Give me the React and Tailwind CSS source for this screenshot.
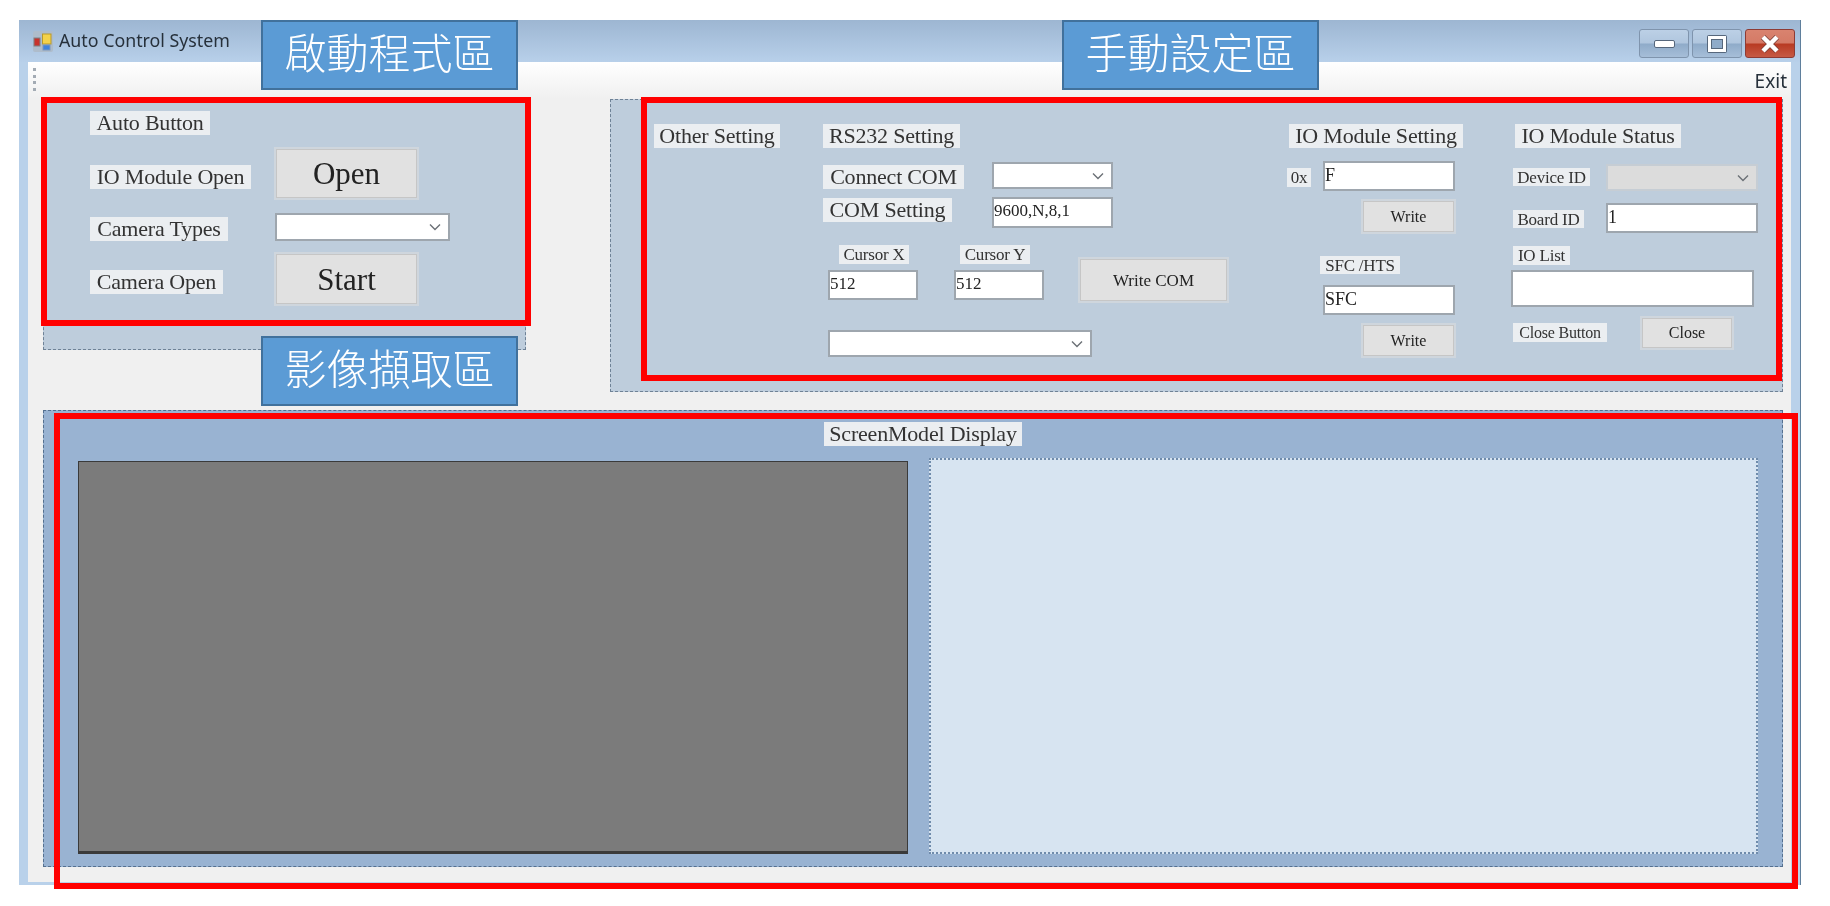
const serif = "font-['Liberation_Serif','Noto_Sans_CJK_TC',serif]";

function Label({ w, h = 24, size = "text-[22px]", className = "", children }) {
  return (
    <div
      style={{ width: w, height: h }}
      className={`flex shrink-0 items-center justify-center whitespace-nowrap bg-[#ebeef1] leading-none tracking-[-0.2px] text-[#333] ${size} ${className}`}
    >
      {children}
    </div>
  );
}

function Btn({ w, h, size = "text-[16px]", className = "", children }) {
  return (
    <div
      style={{ width: w, height: h }}
      className={`flex shrink-0 items-center justify-center border-2 border-[#cfd6dd] bg-[#e1e1e1] leading-none text-[#222] shadow-[inset_0_0_0_1px_#c6c6c6] ${size} ${className}`}
    >
      {children}
    </div>
  );
}

function Input({ w, h = 30, value = "", size = "text-[17px]", className = "" }) {
  return (
    <div
      style={{ width: w, height: h }}
      className={`flex shrink-0 items-start overflow-hidden border-2 border-[#9ea6ae] bg-white pl-0 pt-[2px] leading-[20px] text-[#222] ${size} ${className}`}
    >
      {value}
    </div>
  );
}

function Select({ w, h = 27, disabled = false, className = "" }) {
  return (
    <div
      style={{ width: w, height: h }}
      className={`flex shrink-0 items-center justify-end border-2 pr-[6px] ${disabled ? "border-[#c6cdd4] bg-[#dcdcdc]" : "border-[#9ea6ae] bg-white"} ${className}`}
    >
      <svg width="14" height="8" viewBox="0 0 14 8" fill="none" stroke="#6b7076" strokeWidth="1.4">
        <path d="M2 1.5 7 6.5 12 1.5" />
      </svg>
    </div>
  );
}

function WinButton({ className = "", children }) {
  return (
    <div className={`flex h-[29px] w-[50px] items-center justify-center rounded-[3px] border ${className}`}>
      {children}
    </div>
  );
}

function Callout({ className, children }) {
  return (
    <div
      className={`absolute flex h-[70px] w-[257px] items-center justify-center border-2 border-[#41719c] bg-[#5b9bd5] text-[42px] font-light leading-none text-white ${className}`}
    >
      {children}
    </div>
  );
}

export default function App() {
  return (
    <div className={`relative h-[906px] w-[1830px] overflow-hidden bg-white pl-[19px] pt-[20px] blur-[0.5px] ${serif}`}>
      {/* window */}
      <div className="flex h-[865px] w-[1782px] flex-col border-r border-[#5f7f9c] bg-[#b9d1ea] pr-[9px]">
        {/* title bar */}
        <div className="-mr-[9px] flex h-[42px] shrink-0 items-center bg-gradient-to-b from-[#9db6d2] to-[#b8d0ea] pl-[14px] pr-[5px]">
          <svg width="20" height="21" viewBox="0 0 20 21" className="shrink-0">
            <rect width="20" height="21" rx="2" fill="#aebccb" />
            <rect x="1" y="7" width="6" height="8" fill="#c8322c" stroke="#7d8086" strokeWidth="1" />
            <rect x="9.5" y="3" width="8.5" height="10" fill="#f4d24a" stroke="#b99a2a" strokeWidth="1" />
            <rect x="10" y="14" width="7" height="5" fill="#3f83dc" stroke="#7d98bd" strokeWidth="1" />
          </svg>
          <span className="ml-[6px] font-['Noto_Sans',sans-serif] text-[17.8px] leading-none text-[#26303a]">
            Auto Control System
          </span>
          <div className="ml-auto flex gap-[3px] self-start pt-[9px]">
            <WinButton className="border-[#7f94ad] bg-[linear-gradient(#bcd0e6_0%,#b0c6de_48%,#8fabc9_52%,#a6bed8_100%)]">
              <div className="h-[8px] w-[21px] rounded-[2px] border border-[#56677c] bg-white" />
            </WinButton>
            <WinButton className="border-[#7f94ad] bg-[linear-gradient(#bcd0e6_0%,#b0c6de_48%,#8fabc9_52%,#a6bed8_100%)]">
              <div className="flex h-[18px] w-[20px] items-center justify-center rounded-[2px] bg-[#56677c] p-[1px]">
                <div className="flex h-full w-full items-center justify-center bg-white p-[3px]">
                  <div className="h-full w-full border border-[#56677c] bg-[#8fabc9]" />
                </div>
              </div>
            </WinButton>
            <WinButton className="border-[#8e3b34] bg-[linear-gradient(#d9836f_0%,#d47a66_48%,#b83a22_52%,#c65a45_100%)]">
              <svg width="24" height="20" viewBox="0 0 24 20" fill="none">
                <path d="M5 3 19 17M19 3 5 17" stroke="#7a4038" strokeWidth="6" />
                <path d="M5 3 19 17M19 3 5 17" stroke="#fff" strokeWidth="4.5" />
              </svg>
            </WinButton>
          </div>
        </div>

        {/* client area */}
        <div className="ml-[9px] flex h-[820px] w-[1763px] flex-col bg-[#f0f0f0]">
          {/* menu strip */}
          <div className="flex h-[37px] shrink-0 items-start justify-between bg-gradient-to-b from-white to-[#f0f0f0] pl-[5px] pr-[4px] pt-[5px]">
            <div className="mt-[1px] h-[23px] w-[3px] border-l-[3px] border-dotted border-[#a3abb4]" />
            <span className="mt-[1px] font-['Noto_Sans',sans-serif] text-[19px] leading-[26px] text-[#26303a]">Exit</span>
          </div>

          <div className="flex items-start pl-[15px]">
            {/* left panel */}
            <div className="mt-0 h-[251px] w-[483px] shrink-0 border border-dashed border-[#6f8296] bg-[#becddc] pl-[46px] pt-[11px]">
              <Label w={120}>Auto Button</Label>
              <div className="mt-[12px] grid grid-cols-[184px_auto] items-start">
                <Label w={161} className="mt-[18px]">IO Module Open</Label>
                <Btn w={145} h={53} size="text-[31px]">Open</Btn>
                <Label w={138} className="mt-[17px]">Camera Types</Label>
                <Select w={175} h={28} className="ml-[1px] mt-[13px]" />
                <Label w={133} className="mt-[29px]">Camera Open</Label>
                <Btn w={145} h={54} size="text-[31px]" className="mt-[11px]">Start</Btn>
              </div>
            </div>

            {/* right panel */}
            <div className="ml-[84px] flex h-[293px] w-[1173px] shrink-0 border border-dashed border-[#6f8296] bg-[#becddc] pl-[43px] pt-[24px]">
              <div className="w-[169px] shrink-0">
                <Label w={126}>Other Setting</Label>
              </div>

              <div className="w-[464px] shrink-0">
                <Label w={137}>RS232 Setting</Label>
                <div className="mt-[14px] flex h-[27px]">
                  <Label w={141} className="mt-[3px]">Connect COM</Label>
                  <Select w={121} className="ml-[28px]" />
                </div>
                <div className="mt-[8px] flex h-[31px]">
                  <Label w={129} className="mt-[1px]">COM Setting</Label>
                  <Input w={121} h={31} value="9600,N,8,1" className="ml-[40px]" />
                </div>
                <div className="mt-[17px] flex pl-[5px]">
                  <div className="w-[126px] shrink-0">
                    <Label w={70} h={19} size="text-[17px]" className="ml-[11px]">Cursor X</Label>
                    <Input w={90} value="512" className="mt-[6px]" />
                  </div>
                  <div className="w-[124px] shrink-0">
                    <Label w={70} h={19} size="text-[17px]" className="ml-[6px]">Cursor Y</Label>
                    <Input w={90} value="512" className="mt-[6px]" />
                  </div>
                  <Btn w={151} h={46} size="text-[17px]" className="mt-[12px]">Write COM</Btn>
                </div>
                <Select w={264} className="ml-[5px] mt-[27px]" />
              </div>

              <div className="w-[224px] shrink-0">
                <Label w={174} className="ml-[2px]">IO Module Setting</Label>
                <div className="mt-[13px] flex">
                  <Label w={24} h={19} size="text-[17px]" className="mt-[7px]">0x</Label>
                  <Input w={132} value="F" size="text-[18px]" className="ml-[12px]" />
                </div>
                <Btn w={95} h={35} className="ml-[74px] mt-[8px]">Write</Btn>
                <Label w={80} h={18} size="text-[17px]" className="ml-[33px] mt-[22px]">SFC /HTS</Label>
                <Input w={132} value="SFC" size="text-[18px]" className="ml-[36px] mt-[11px]" />
                <Btn w={95} h={35} className="ml-[74px] mt-[8px]">Write</Btn>
              </div>

              <div className="shrink-0">
                <Label w={166} className="ml-[4px]">IO Module Status</Label>
                <div className="mt-[16px] flex">
                  <Label w={77} h={18} size="text-[17px]" className="ml-[2px] mt-[4px]">Device ID</Label>
                  <Select w={152} disabled className="ml-[16px]" />
                </div>
                <div className="mt-[12px] flex">
                  <Label w={71} h={18} size="text-[17px]" className="ml-[2px] mt-[7px]">Board ID</Label>
                  <Input w={152} value="1" size="text-[18px]" className="ml-[22px]" />
                </div>
                <Label w={57} h={19} size="text-[17px]" className="ml-[2px] mt-[13px]">IO List</Label>
                <Input w={243} h={37} className="mt-[5px]" />
                <div className="mt-[9px] flex">
                  <Label w={94} h={19} size="text-[16px]" className="ml-[2px] mt-[7px]">Close Button</Label>
                  <Btn w={94} h={34} className="ml-[33px]">Close</Btn>
                </div>
              </div>
            </div>
          </div>

          {/* bottom panel */}
          <div className="ml-[15px] mt-[18px] flex h-[457px] w-[1740px] shrink-0 flex-col border border-dashed border-[#55708f] bg-[#99b3d2]">
            <Label w={198} h={24} className="ml-[780px] mt-[11px]">ScreenModel Display</Label>
            <div className="mt-[12px] flex w-full items-end pl-[34px]">
              <div className="h-[393px] w-[830px] shrink-0 border-[1.5px] border-b-[3px] border-[#3a3a3a] bg-[#7b7b7b]" />
              <div className="ml-[21px] h-[396px] w-[829px] shrink-0 border-2 border-dotted border-[#6f8bab] bg-[#d7e4f1]" />
            </div>
          </div>
        </div>
      </div>

      {/* highlight overlays */}
      <div className="pointer-events-none absolute left-[41px] top-[97px] h-[229px] w-[490px] border-[6px] border-[#ff0000]" />
      <div className="pointer-events-none absolute left-[641px] top-[97px] h-[284px] w-[1141px] border-[6px] border-[#ff0000]" />
      <div className="pointer-events-none absolute left-[54px] top-[413px] h-[476px] w-[1744px] border-[6px] border-[#ff0000]" />

      <Callout className="left-[261px] top-[20px]">啟動程式區</Callout>
      <Callout className="left-[1062px] top-[20px]">手動設定區</Callout>
      <Callout className="left-[261px] top-[336px]">影像擷取區</Callout>
    </div>
  );
}
